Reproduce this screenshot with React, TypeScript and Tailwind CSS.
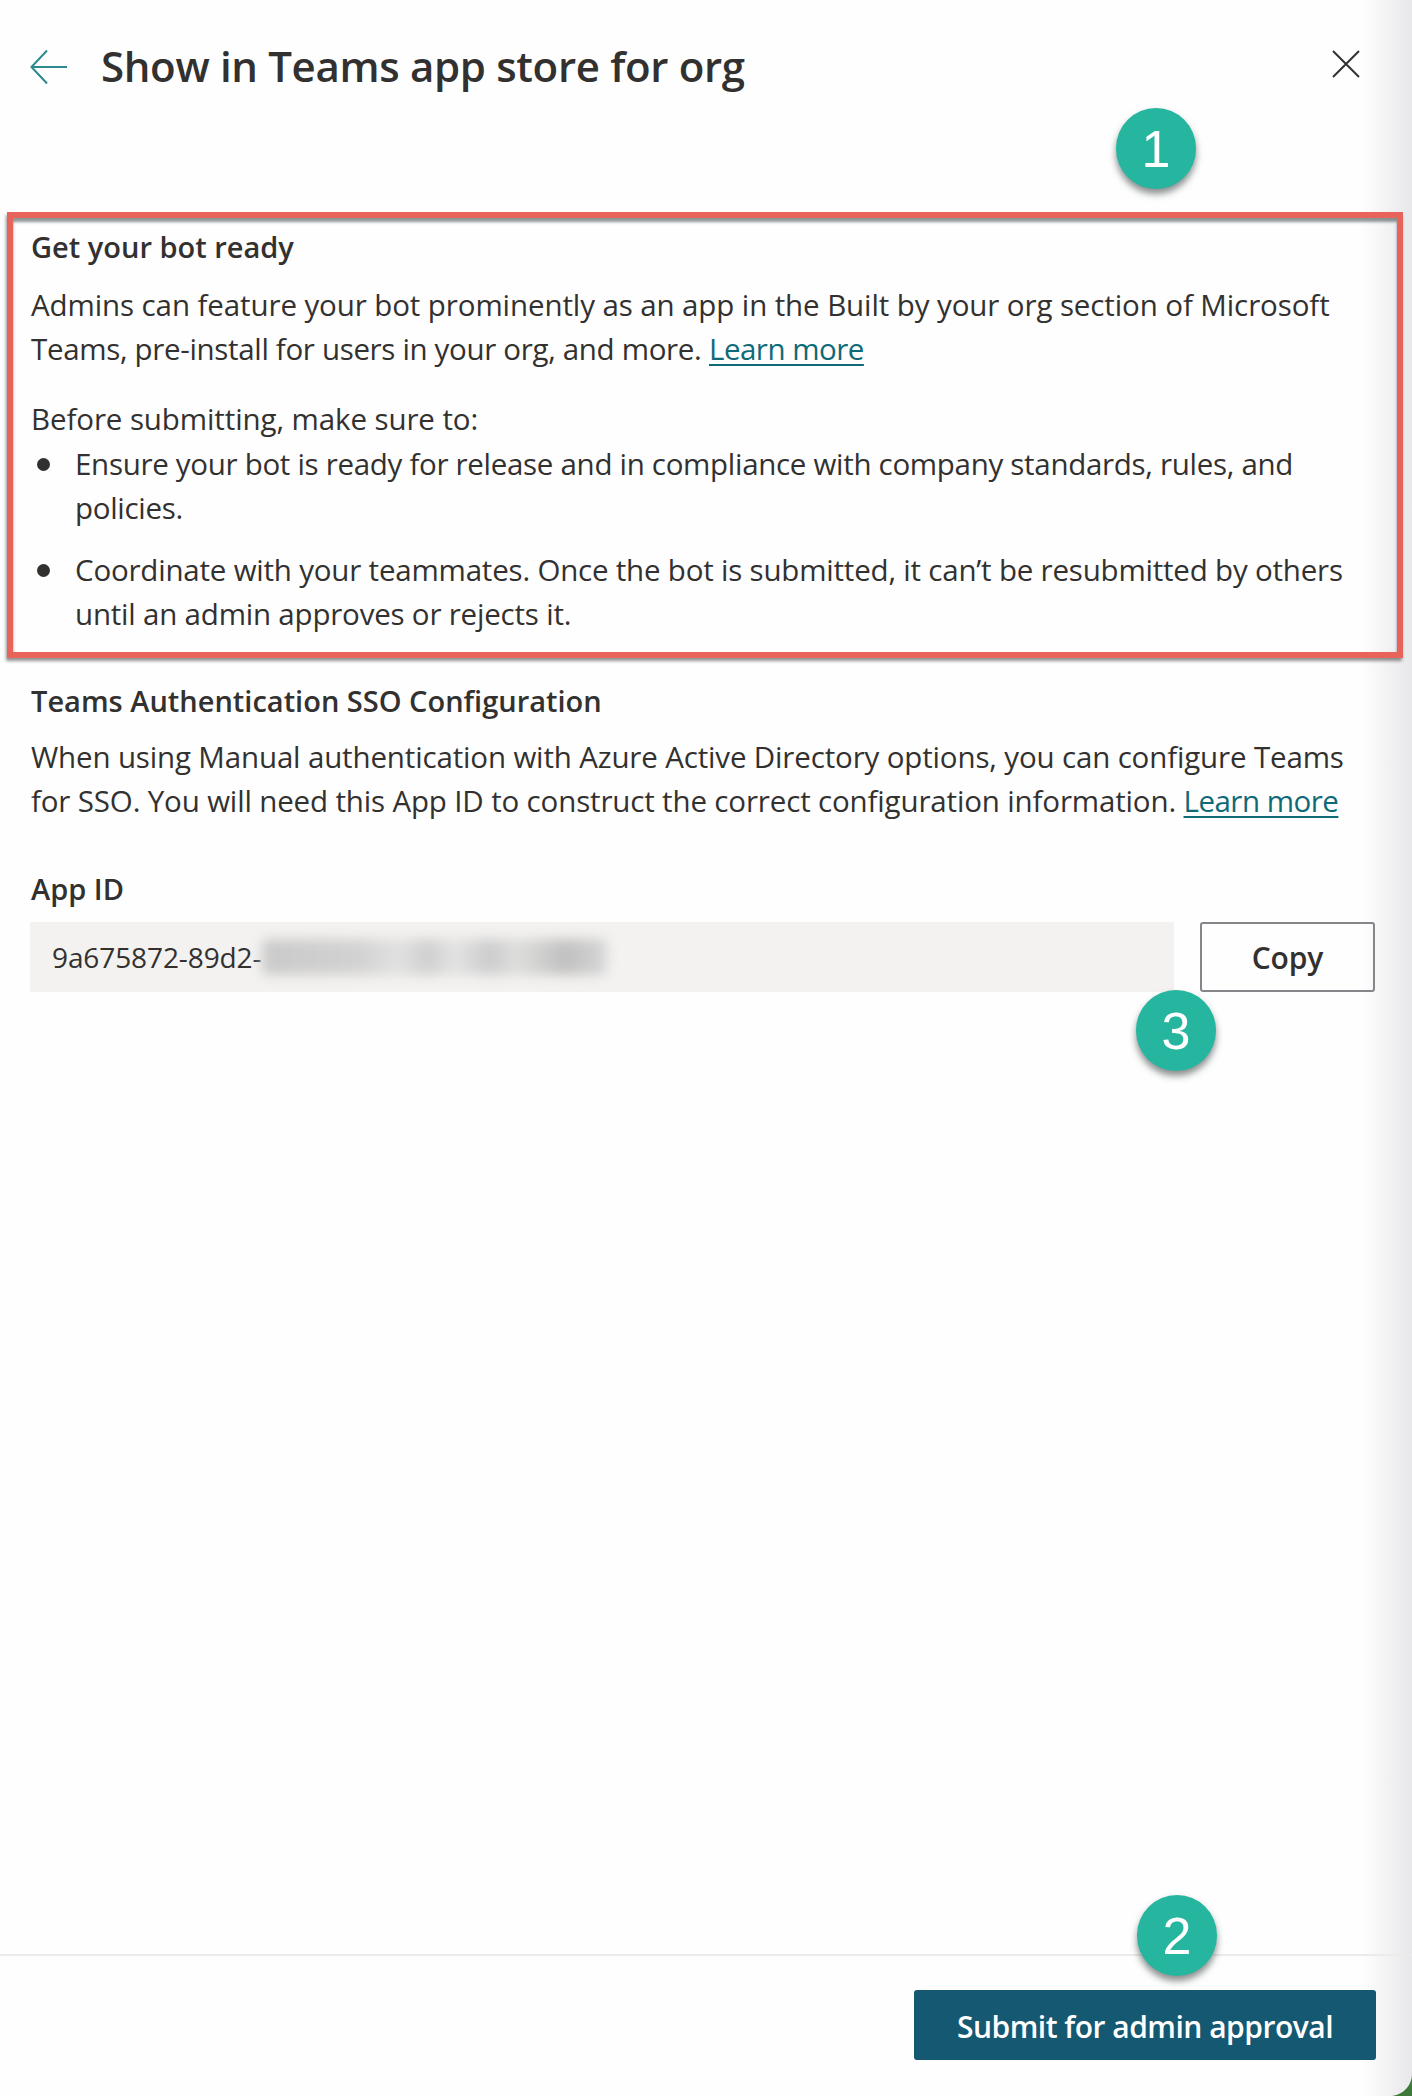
const F = "font-['Open_Sans','Noto_Sans',sans-serif]";

function Badge({ n, cls }: { n: string; cls: string }) {
  return (
    <div className={"absolute z-20 w-[80px] h-[81px] rounded-full bg-[#26b69f] text-white flex items-center justify-center text-[52px] leading-none font-['Liberation_Sans',sans-serif] shadow-[0_5px_7px_rgba(40,50,50,0.55)] " + cls}>
      {n}
    </div>
  );
}

function Learn() {
  return <a className="text-[#0f6a78] underline underline-offset-[4px] decoration-[2px] tracking-[-0.5px]">Learn more</a>;
}

function Bullet() {
  return <span className="mt-[16px] w-[13px] h-[13px] rounded-full bg-[#323130] shrink-0" />;
}

export default function App() {
  return (
    <div className={"relative w-[1412px] h-[2096px] overflow-hidden bg-[#fefefe] flex flex-col text-[#323130] " + F}>
      <div className="absolute top-0 right-0 w-[50px] h-full bg-[linear-gradient(90deg,rgba(228,228,232,0),rgba(228,228,232,0.85))]" />

      <header className="relative h-[134px] shrink-0 flex items-center pl-[30px] pr-[52px]">
        <svg width="38" height="36" viewBox="0 0 38 36" fill="none" stroke="#2b8a8e" strokeWidth="2" className="shrink-0">
          <path d="M1.5 18H37M17 1.5 1.5 18 17 34.5" />
        </svg>
        <h1 className="ml-[33px] -mt-[2px] text-[42px] leading-[54px] font-semibold tracking-[-0.33px] flex-1">Show in Teams app store for org</h1>
        <svg width="28" height="28" viewBox="0 0 28 28" fill="none" stroke="#323130" strokeWidth="2" className="shrink-0 -mt-[6px]">
          <path d="M1 1 27 27M27 1 1 27" />
        </svg>
      </header>

      <section className="relative mt-[78px] ml-[7px] w-[1396px] h-[446px] shrink-0 border-[6px] border-[#e8635a] shadow-[inset_0_4px_3px_rgba(70,80,80,0.6),-1px_3px_3px_rgba(60,60,60,0.55)] pl-[18px] pr-[20px] text-[29.5px] leading-[44px] tracking-[-0.1px]">
        <h2 className="mt-[7px] text-[29px] leading-[44px] font-semibold tracking-[0px]">Get your bot ready</h2>
        <p className="mt-[14px]">
          Admins can feature your bot prominently as an app in the Built by your org section of Microsoft <span className="tracking-[-0.33px]">Teams, pre-install for users in your org, and more.</span> <Learn />
        </p>
        <p className="mt-[26px]">Before submitting, make sure to:</p>
        <ul className="mt-[1px] ml-[6px] flex flex-col gap-[18px]">
          <li className="flex gap-[25px]">
            <Bullet />
            <span className="tracking-[-0.3px]">Ensure your bot is ready for release and in compliance with company standards, rules, and policies.</span>
          </li>
          <li className="flex gap-[25px]">
            <Bullet />
            <span className="tracking-[-0.2px]">Coordinate with your teammates. Once the bot is submitted, it can’t be resubmitted by others until an admin approves or rejects it.</span>
          </li>
        </ul>
      </section>

      <section className="relative pl-[31px] pr-[20px] text-[29.5px] leading-[44px] tracking-[-0.15px]">
        <h2 className="mt-[21px] text-[29px] font-semibold tracking-[0px]">Teams Authentication SSO Configuration</h2>
        <p className="mt-[12px] pr-[30px]">
          When using Manual authentication with Azure Active Directory options, you can configure Teams for SSO. You will need this App ID to construct the correct configuration information. <Learn />
        </p>
        <label className="block pt-[44px] text-[29px] font-semibold tracking-[0px]">App ID</label>
      </section>

      <div className="relative mt-[11px] ml-[30px] flex">
        <div className="w-[1144px] h-[70px] bg-[#f3f2f1] pl-[22px] flex items-center text-[28px] tracking-[-0.1px]">
          <span>9a675872-89d2-</span>
          <div className="ml-[1px] w-[345px] h-[36px] rounded-[6px] blur-[6px] bg-[linear-gradient(90deg,#cbcaca,#d3d2d2_28%,#e2e1e1_40%,#d0cfcf_48%,#e4e3e3_56%,#cdcccd_66%,#dededd_74%,#c1c0c0_88%,#d8d7d7)]" />
        </div>
        <button className="ml-[26px] w-[175px] h-[70px] rounded-[3px] border-2 border-[#86858a] text-[30px] font-semibold tracking-[-0.1px] flex items-center justify-center">Copy</button>
      </div>

      <footer className="relative mt-auto h-[142px] border-t-2 border-[#edebe9] flex justify-end pt-[34px] pr-[36px]">
        <button className="w-[462px] h-[70px] pt-[2px] rounded-[3px] bg-[#155872] text-white text-[30px] font-semibold tracking-[-0.5px] flex items-center justify-center">Submit for admin approval</button>
      </footer>

      <svg width="22" height="22" viewBox="0 0 22 22" className="absolute bottom-0 right-0">
        <path d="M22 0C22 12 12 22 0 22H22Z" fill="#3d7a3a" />
      </svg>

      <Badge n="1" cls="left-[1116px] top-[108px]" />
      <Badge n="3" cls="left-[1136px] top-[990px]" />
      <Badge n="2" cls="left-[1137px] top-[1895px]" />
    </div>
  );
}
